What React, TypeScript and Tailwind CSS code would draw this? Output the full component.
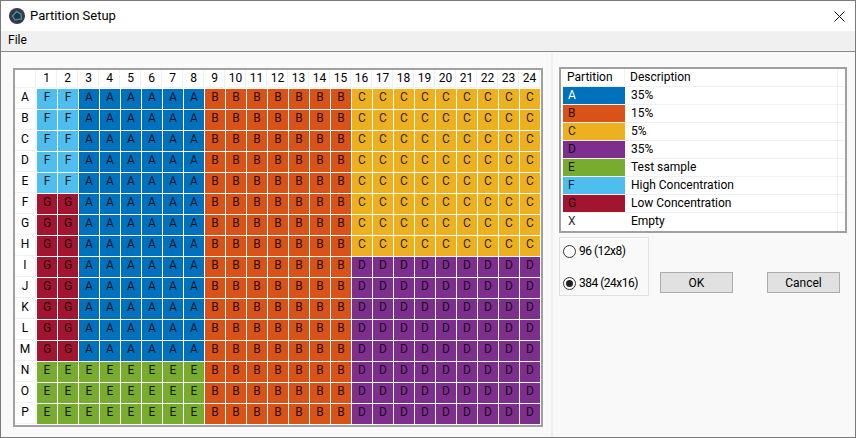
const ROWS = 'ABCDEFGHIJKLMNOP'.split('')
const COLS = Array.from({ length: 24 }, (_, i) => i + 1)

const COLORS: Record<string, string> = {
  A: 'bg-[#0072bd]',
  B: 'bg-[#d95319]',
  C: 'bg-[#edb120]',
  D: 'bg-[#7e2f8e]',
  E: 'bg-[#77ac30]',
  F: 'bg-[#4dbeee]',
  G: 'bg-[#a2142f]',
  X: 'bg-white',
}

const LEGEND = [
  { key: 'A', text: '35%' },
  { key: 'B', text: '15%' },
  { key: 'C', text: '5%' },
  { key: 'D', text: '35%' },
  { key: 'E', text: 'Test sample' },
  { key: 'F', text: 'High Concentration' },
  { key: 'G', text: 'Low Concentration' },
  { key: 'X', text: 'Empty' },
]

function partitionAt(row: number, col: number) {
  if (col >= 16) return row < 8 ? 'C' : 'D'
  if (col >= 9) return 'B'
  if (row >= 13) return 'E'
  if (col >= 3) return 'A'
  return row < 5 ? 'F' : 'G'
}

function PlateGrid() {
  return (
    <div className="ml-[12px] mt-[16px] w-[530px] h-[359px] border-2 border-[#a0a0a0] bg-white">
      <div className="grid grid-cols-[21px_repeat(24,20px)] grid-rows-[18px_repeat(16,20px)] gap-[1px]">
        <div className="border-r border-b border-[#f0f0f0]" />
        {COLS.map((c) => (
          <div key={c} className="leading-[16px] text-center text-black border-r border-b border-[#f0f0f0]">
            {c}
          </div>
        ))}
        {ROWS.map((r, ri) => (
          <PlateRow key={r} label={r} row={ri} />
        ))}
      </div>
    </div>
  )
}

function PlateRow({ label, row }: { label: string; row: number }) {
  return (
    <>
      <div className="leading-[17px] text-center text-black border-r border-b border-[#f0f0f0]">{label}</div>
      {COLS.map((c) => {
        const p = partitionAt(row, c)
        return (
          <div key={c} className={`leading-[17px] text-center text-black/85 ${COLORS[p]}`}>
            {p}
          </div>
        )
      })}
    </>
  )
}

function LegendTable() {
  return (
    <div className="w-[288px] h-[166px] border-2 border-[#a0a0a0] bg-white pl-[2px]">
      <div className="flex h-[18px] leading-[16px] border-b border-[#f0f0f0] text-black">
        <div className="w-[62px] pl-[4px] border-r border-[#f0f0f0]">Partition</div>
        <div className="flex-1 pl-[5px] border-r border-[#f0f0f0]">Description</div>
        <div className="w-[7px]" />
      </div>
      {LEGEND.map((l) => (
        <div key={l.key} className="flex h-[18px] leading-[16px] border-b border-[#f0f0f0] text-black last:border-b-0">
          <div className={`w-[62px] pl-[5px] ${COLORS[l.key]} ${l.key === 'A' ? 'text-white' : 'text-black/85'}`}>
            {l.key}
          </div>
          <div className="flex-1 pl-[6px] border-r border-[#f0f0f0]">{l.text}</div>
          <div className="w-[7px]" />
        </div>
      ))}
    </div>
  )
}

function Radio({ label, checked, className }: { label: string; checked?: boolean; className?: string }) {
  return (
    <div className={`flex items-center gap-[3px] h-[14px] text-black ${className ?? ''}`}>
      <span className="flex items-center justify-center w-[13px] h-[13px] rounded-full border border-[#333333] bg-white">
        {checked && <span className="block w-[7px] h-[7px] rounded-full bg-[#222222]" />}
      </span>
      <span className="tracking-[-0.5px]">{label}</span>
    </div>
  )
}

function DialogButton({ label }: { label: string }) {
  return (
    <button className="w-[73px] h-[21px] leading-[18px] border border-[#adadad] bg-[#e1e1e1] text-black text-center">
      {label}
    </button>
  )
}

export default function App() {
  return (
    <div
      className="w-[856px] h-[438px] flex flex-col overflow-hidden border border-[#7a7a7a] bg-white text-[12px]"
      style={{ fontFamily: 'Roboto, "Noto Sans", sans-serif' }}
    >
      <div className="flex items-center h-[30px] shrink-0 pl-[8px] pr-[10px]">
        <svg width="16" height="16" viewBox="0 0 16 16">
          <circle cx="8" cy="8" r="8" fill="#4a3148" />
          <circle cx="8" cy="8" r="5.5" fill="#26323f" />
          <path d="M3.5 8 L7.5 3.5 L12 6 L12.5 11 L6 12 Z" fill="none" stroke="#2f9ea3" strokeWidth="1.4" />
        </svg>
        <span className="ml-[5px] text-[13px] text-black">Partition Setup</span>
        <svg className="ml-auto" width="11" height="11" viewBox="0 0 11 11">
          <path d="M0.5 0.5 L10.5 10.5 M10.5 0.5 L0.5 10.5" stroke="#111111" strokeWidth="1" />
        </svg>
      </div>
      <div className="h-[20px] shrink-0 leading-[18px] pl-[7px] bg-[#f0f0f0] border-b border-[#8a8a8a] text-black box-content">
        File
      </div>
      <div className="flex flex-1 bg-[#f9f9f9]">
        <div className="w-[550px] shrink-0">
          <PlateGrid />
        </div>
        <div className="w-[2px] bg-[#f0f0f0]" />
        <div className="flex-1 pl-[6px] pt-[15px]">
          <LegendTable />
          <div className="flex mt-[4px]">
            <div className="w-[90px] h-[59px] border border-[#e0e0e0] pl-[3px] pt-[6px]">
              <Radio label="96 (12x8)" />
              <Radio label="384 (24x16)" checked className="mt-[18px]" />
            </div>
            <div className="flex gap-[34px] ml-[11px] mt-[35px] h-[21px]">
              <DialogButton label="OK" />
              <DialogButton label="Cancel" />
            </div>
          </div>
        </div>
      </div>
    </div>
  )
}
